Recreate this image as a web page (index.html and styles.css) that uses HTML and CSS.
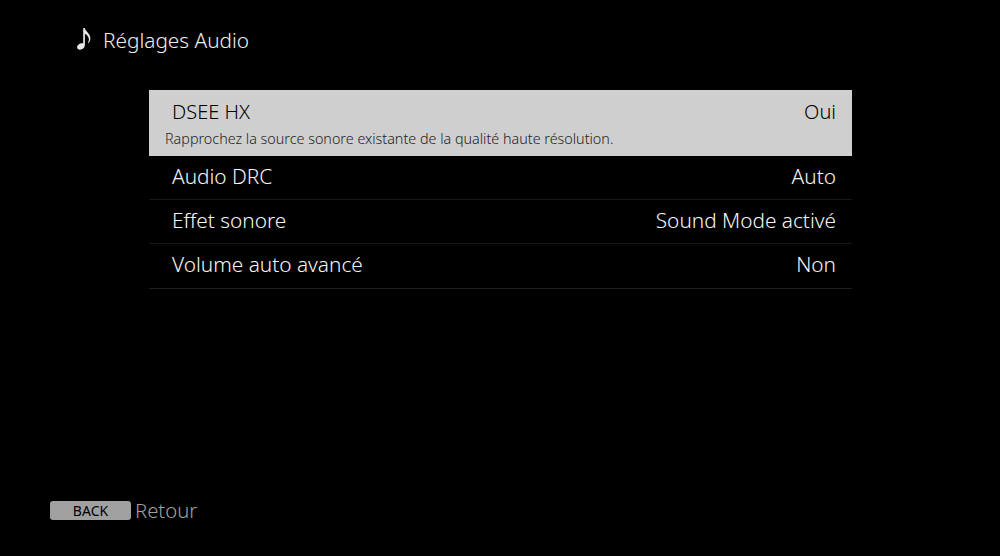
FILE: index.html
```html
<!DOCTYPE html>
<html lang="fr">
<head>
  <meta charset="UTF-8" />
  <title>Réglages Audio</title>
  <link rel="stylesheet" href="styles.css">
</head>
<body>
  <header class="title">
    <svg class="note" width="16" height="24" viewBox="0 0 16 24">
      <path d="M7.200 1h1.600c.3 3.200 5.600 5.200 5.600 10.300 0 2-.7 3.500-1.700 4.800l-.7-.5c.6-1.100.9-2.200.9-3.300 0-2.800-2.400-4.700-4-5.600v11.300c0 2.700-2.500 4.700-5 4.700-1.700 0-2.800-.9-2.800-2.400 0-2.400 2.600-4.100 4.900-4.100.4 0 .8 0 1.200.1z" fill="#e8e8e8"/>
    </svg>
    <h1>Réglages Audio</h1>
  </header>

  <!-- Settings list -->
  <main class="list">
    <div class="row selected">
      <div class="row-main"><span>DSEE HX</span><span>Oui</span></div>
      <p class="hint">Rapprochez la source sonore existante de la qualité haute résolution.</p>
    </div>
    <div class="row"><div class="row-main"><span>Audio DRC</span><span>Auto</span></div></div>
    <div class="row"><div class="row-main"><span>Effet sonore</span><span>Sound Mode activé</span></div></div>
    <div class="row"><div class="row-main"><span>Volume auto avancé</span><span>Non</span></div></div>
  </main>

  <footer class="footer">
    <span class="back-key">BACK</span>
    <span class="back-label">Retour</span>
  </footer>
</body>
</html>
```

FILE: styles.css
```css
html, body { height: 100%; }

body {
  margin: 0;
  background: #000;
  color: #f6f6f6;
  font-family: "Noto Sans", "Open Sans", sans-serif;
  font-weight: 300;
  display: flex;
  flex-direction: column;
  overflow: hidden;
}

/* ---------- Title ---------- */
.title {
  display: flex;
  align-items: center;
  gap: 11px;
  height: 24px;
  padding: 27px 0 0 76px;
}
.note { flex: none; }
h1 {
  margin: 2px 0 0;
  font-size: 20.800px;
  font-weight: 300;
  color: #f0f0f0;
}

/* ---------- Settings list ---------- */
.list {
  width: 703px;
  margin: 39px 0 0 149px;
}
.row {
  height: 43px;
  padding: 0 16px 0 23px;
  border-bottom: 1px solid #181818;
}
.row:last-child { height: 44px; border-bottom-color: #1e1e1e; }
.row-main {
  display: flex;
  justify-content: space-between;
  align-items: center;
  height: 39px;
  font-size: 20.800px;
}
.selected {
  height: 66px;
  padding: 0 16px;
  border-bottom: 0;
  background: #cfcfcf;
  color: #000;
}
.selected .row-main {
  height: 43px;
  padding-left: 7px;
  font-size: 20px;
}
.hint {
  margin: -3px 0 0;
  font-size: 14.350px;
  line-height: 17px;
  color: #222;
}

/* ---------- Footer ---------- */
.footer {
  display: flex;
  align-items: center;
  gap: 4px;
  margin-top: auto;
  padding: 0 0 32px 50px;
}
.back-key {
  width: 81px;
  height: 19px;
  line-height: 19px;
  border-radius: 3px;
  background: #a0a0a0;
  color: #000;
  font-size: 14px;
  font-weight: 400;
  text-align: center;
}
.back-label {
  font-size: 20.300px;
  color: #a0a0a0;
}
```
